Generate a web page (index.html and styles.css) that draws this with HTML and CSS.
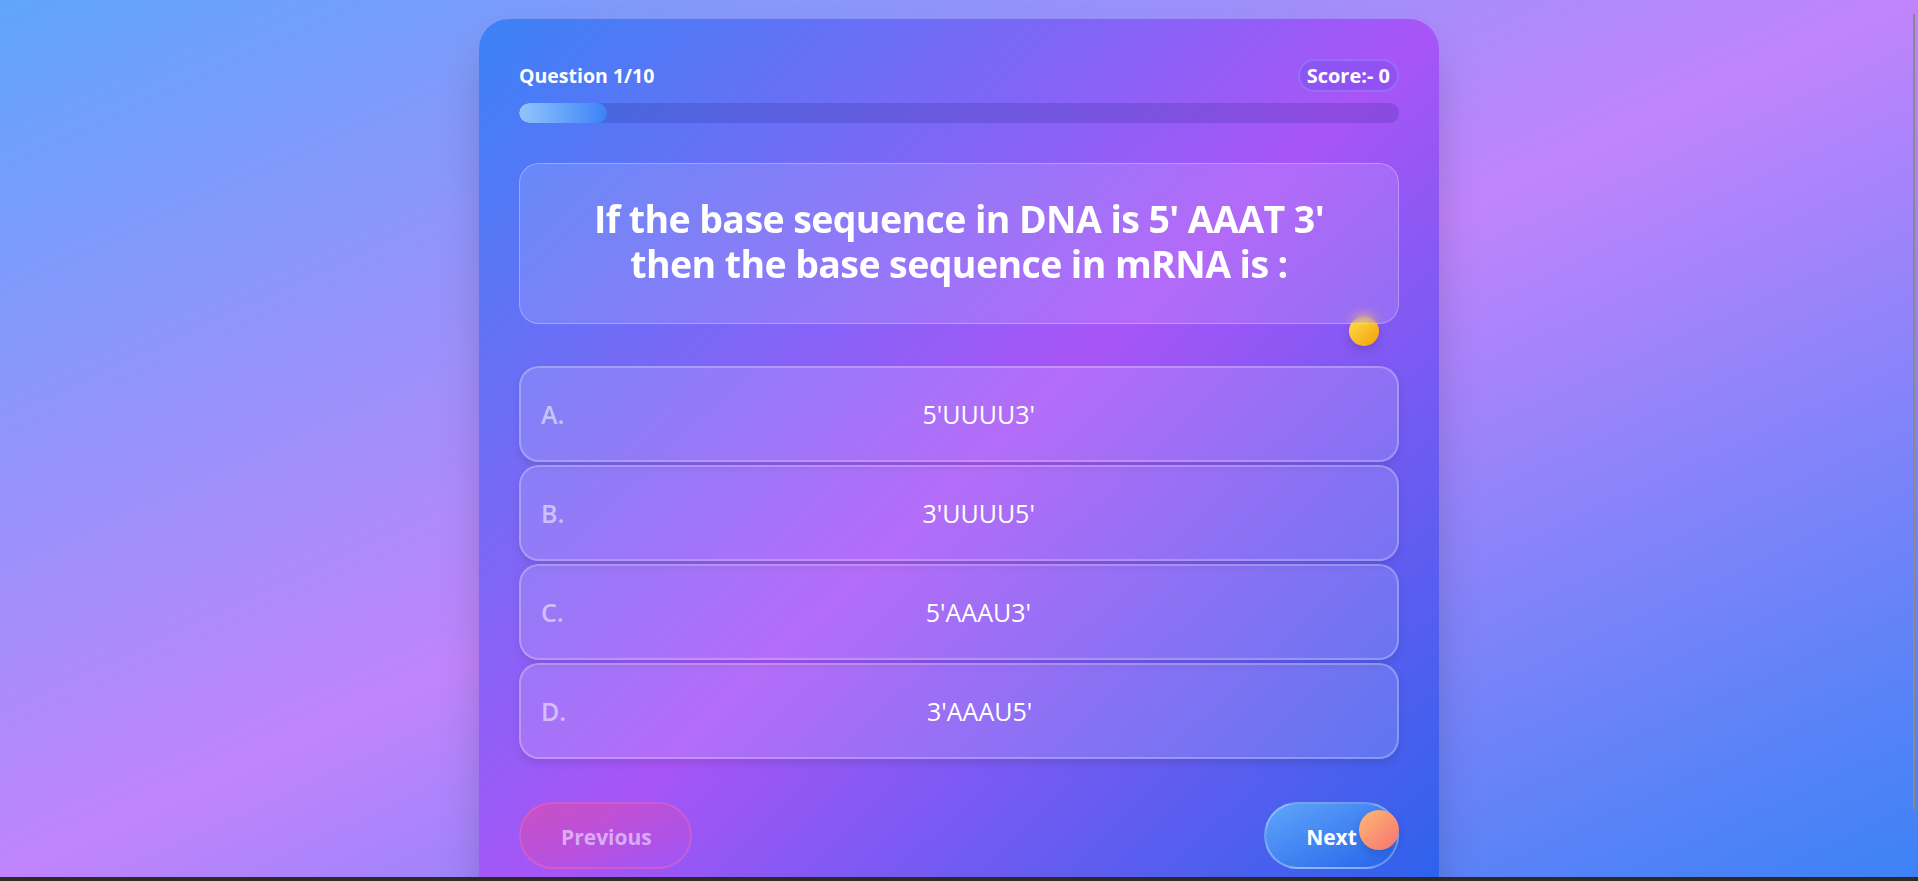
FILE: index.html
```html
<!DOCTYPE html>
<html lang="en">
<head>
<meta charset="utf-8">
<title>Quiz</title>
<link rel="stylesheet" href="styles.css">
</head>
<body>
<div class="page">
  <main class="card">
    <div class="quiz-head">
      <span class="q-count">Question 1/10</span>
      <span class="score">Score:- 0</span>
    </div>
    <div class="progress"><div class="progress-fill" style="width:10%"></div></div>

    <div class="question-wrap">
      <span class="float-dot"></span>
      <div class="question">
        <h1><span class="q-line">If the base sequence in DNA is 5' AAAT 3'</span><span class="q-line">then the base sequence in mRNA is :</span></h1>
      </div>
    </div>

    <ul class="options">
      <li class="option"><span class="opt-letter">A.</span><span class="opt-text">5'UUUU3'</span></li>
      <li class="option"><span class="opt-letter">B.</span><span class="opt-text">3'UUUU5'</span></li>
      <li class="option"><span class="opt-letter">C.</span><span class="opt-text">5'AAAU3'</span></li>
      <li class="option"><span class="opt-letter">D.</span><span class="opt-text">3'AAAU5'</span></li>
    </ul>

    <div class="nav">
      <button class="btn btn-prev" disabled>Previous</button>
      <button class="btn btn-next">Next<span class="next-dot"></span></button>
    </div>
  </main>
</div>
<div class="scroll-thumb"></div>
<div class="bottom-bar"></div>
</body>
</html>
```

FILE: styles.css
```css
* { box-sizing: border-box; }

html, body {
  margin: 0;
  padding: 0;
  height: 100%;
  overflow: hidden;
}

body {
  font-family: "Open Sans", "Noto Sans", sans-serif;
  color: #fff;
  background: linear-gradient(to bottom right, #60a5fa, #c084fc, #3b82f6);
}

.page {
  padding-top: 19px;
  display: flex;
  justify-content: center;
}

.card {
  width: 960px;
  height: 920px;
  padding: 40px;
  border-radius: 30px;
  background: linear-gradient(to bottom right, #3b82f6, #a855f7, #2563eb);
  box-shadow: 0 25px 50px -12px rgba(0, 0, 0, 0.25);
}

.quiz-head {
  display: flex;
  justify-content: space-between;
  align-items: center;
  height: 33px;
}

.q-count {
  font-size: 19.5px;
  font-weight: 700;
}

.score {
  height: 33px;
  padding: 0 7px;
  display: flex;
  align-items: center;
  font-size: 20px;
  font-weight: 700;
  border-radius: 999px;
  background: rgba(79, 70, 229, 0.24);
  border: 2px solid rgba(165, 180, 252, 0.3);
}

.progress {
  margin-top: 11px;
  height: 20px;
  border-radius: 10px;
  background: rgba(30, 27, 120, 0.18);
  overflow: hidden;
}

.progress-fill {
  height: 100%;
  border-radius: 10px;
  background: linear-gradient(to right, #93c5fd, #3b82f6);
}

.question-wrap {
  position: relative;
  margin-top: 40px;
}

.question {
  position: relative;
  z-index: 1;
  height: 161px;
  padding: 32px 24px 0;
  border-radius: 20px;
  background: rgba(255, 255, 255, 0.13);
  border: 1px solid rgba(255, 255, 255, 0.28);
  backdrop-filter: blur(6px);
  text-align: center;
}

.question h1 {
  margin: 0;
  font-size: 37.5px;
  line-height: 45px;
  font-weight: 700;
  letter-spacing: -0.6px;
}

.q-line {
  display: block;
  height: 45px;
}

.float-dot {
  position: absolute;
  left: 830px;
  top: 153px;
  width: 30px;
  height: 30px;
  border-radius: 50%;
  background: linear-gradient(to bottom right, #fde047, #f59e0b);
  box-shadow: 0 4px 10px rgba(0, 0, 0, 0.15);
}

.options {
  list-style: none;
  margin: 42px 0 0;
  padding: 0;
  display: flex;
  flex-direction: column;
  gap: 3px;
}

.option {
  height: 96px;
  display: flex;
  align-items: center;
  padding: 0 20px;
  border-radius: 20px;
  border: 2px solid rgba(255, 255, 255, 0.25);
  background: rgba(255, 255, 255, 0.14);
  box-shadow: 0 4px 8px rgba(0, 0, 0, 0.1);
}

.opt-letter {
  font-size: 25px;
  font-weight: 600;
  color: rgba(255, 255, 255, 0.55);
  margin-right: 16px;
}

.opt-text {
  flex: 1;
  text-align: center;
  font-size: 25px;
  font-weight: 500;
}

.nav {
  margin-top: 43px;
  display: flex;
  justify-content: space-between;
}

.btn {
  position: relative;
  height: 67px;
  padding: 2px 40px 0;
  border-radius: 999px;
  font-family: inherit;
  font-size: 21px;
  font-weight: 700;
  color: #fff;
  cursor: pointer;
}

.btn-prev {
  width: 173px;
  background: linear-gradient(to bottom right, rgba(236, 72, 153, 0.55), rgba(168, 85, 247, 0.55));
  border: 2px solid rgba(244, 114, 182, 0.35);
  color: rgba(233, 213, 255, 0.7);
}

.btn-next {
  width: 135px;
  background: linear-gradient(to bottom right, #60a5fa, #2563eb);
  border: 2px solid rgba(255, 255, 255, 0.3);
}

.next-dot {
  position: absolute;
  left: 93px;
  top: 6px;
  width: 40px;
  height: 40px;
  border-radius: 50%;
  background: linear-gradient(to bottom right, #fdba74, #f87171);
  box-shadow: 0 4px 10px rgba(0, 0, 0, 0.15);
}

.scroll-thumb {
  position: fixed;
  right: 3px;
  top: 14px;
  width: 2px;
  height: 795px;
  background: #8a8a8a;
}

.bottom-bar {
  position: fixed;
  left: 0;
  right: 0;
  bottom: 0;
  height: 4px;
  background: #2b2b2b;
}
```
